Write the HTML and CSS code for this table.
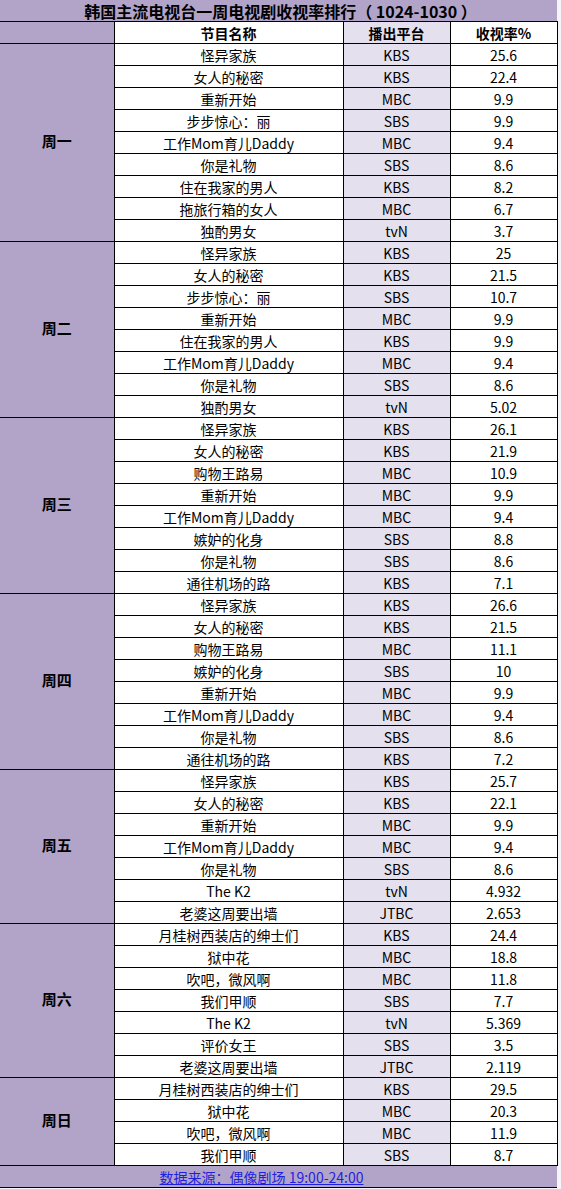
FILE: index.html
```html
<!DOCTYPE html>
<html lang="zh-CN">
<head>
<meta charset="utf-8">
<title>韩国主流电视台一周电视剧收视率排行</title>
<link rel="stylesheet" href="styles.css">
</head>
<body>
<table class="rank">
<colgroup><col class="c-day"><col class="c-name"><col class="c-plat"><col class="c-rate"></colgroup>
<thead>
<tr class="title-row"><th colspan="4">韩国主流电视台一周电视剧收视率排行（ 1024-1030 ）</th></tr>
<tr class="head-row"><th class="day"></th><th>节目名称</th><th class="plat">播出平台</th><th>收视率%</th></tr>
</thead>
<tbody>
<tr><td class="day" rowspan="9">周一</td><td>怪异家族</td><td class="plat">KBS</td><td>25.6</td></tr>
<tr><td>女人的秘密</td><td class="plat">KBS</td><td>22.4</td></tr>
<tr><td>重新开始</td><td class="plat">MBC</td><td>9.9</td></tr>
<tr><td>步步惊心：丽</td><td class="plat">SBS</td><td>9.9</td></tr>
<tr><td>工作Mom育儿Daddy</td><td class="plat">MBC</td><td>9.4</td></tr>
<tr><td>你是礼物</td><td class="plat">SBS</td><td>8.6</td></tr>
<tr><td>住在我家的男人</td><td class="plat">KBS</td><td>8.2</td></tr>
<tr><td>拖旅行箱的女人</td><td class="plat">MBC</td><td>6.7</td></tr>
<tr><td>独酌男女</td><td class="plat">tvN</td><td>3.7</td></tr>

<tr><td class="day" rowspan="8">周二</td><td>怪异家族</td><td class="plat">KBS</td><td>25</td></tr>
<tr><td>女人的秘密</td><td class="plat">KBS</td><td>21.5</td></tr>
<tr><td>步步惊心：丽</td><td class="plat">SBS</td><td>10.7</td></tr>
<tr><td>重新开始</td><td class="plat">MBC</td><td>9.9</td></tr>
<tr><td>住在我家的男人</td><td class="plat">KBS</td><td>9.9</td></tr>
<tr><td>工作Mom育儿Daddy</td><td class="plat">MBC</td><td>9.4</td></tr>
<tr><td>你是礼物</td><td class="plat">SBS</td><td>8.6</td></tr>
<tr><td>独酌男女</td><td class="plat">tvN</td><td>5.02</td></tr>

<tr><td class="day" rowspan="8">周三</td><td>怪异家族</td><td class="plat">KBS</td><td>26.1</td></tr>
<tr><td>女人的秘密</td><td class="plat">KBS</td><td>21.9</td></tr>
<tr><td>购物王路易</td><td class="plat">MBC</td><td>10.9</td></tr>
<tr><td>重新开始</td><td class="plat">MBC</td><td>9.9</td></tr>
<tr><td>工作Mom育儿Daddy</td><td class="plat">MBC</td><td>9.4</td></tr>
<tr><td>嫉妒的化身</td><td class="plat">SBS</td><td>8.8</td></tr>
<tr><td>你是礼物</td><td class="plat">SBS</td><td>8.6</td></tr>
<tr><td>通往机场的路</td><td class="plat">KBS</td><td>7.1</td></tr>

<tr><td class="day" rowspan="8">周四</td><td>怪异家族</td><td class="plat">KBS</td><td>26.6</td></tr>
<tr><td>女人的秘密</td><td class="plat">KBS</td><td>21.5</td></tr>
<tr><td>购物王路易</td><td class="plat">MBC</td><td>11.1</td></tr>
<tr><td>嫉妒的化身</td><td class="plat">SBS</td><td>10</td></tr>
<tr><td>重新开始</td><td class="plat">MBC</td><td>9.9</td></tr>
<tr><td>工作Mom育儿Daddy</td><td class="plat">MBC</td><td>9.4</td></tr>
<tr><td>你是礼物</td><td class="plat">SBS</td><td>8.6</td></tr>
<tr><td>通往机场的路</td><td class="plat">KBS</td><td>7.2</td></tr>

<tr><td class="day" rowspan="7">周五</td><td>怪异家族</td><td class="plat">KBS</td><td>25.7</td></tr>
<tr><td>女人的秘密</td><td class="plat">KBS</td><td>22.1</td></tr>
<tr><td>重新开始</td><td class="plat">MBC</td><td>9.9</td></tr>
<tr><td>工作Mom育儿Daddy</td><td class="plat">MBC</td><td>9.4</td></tr>
<tr><td>你是礼物</td><td class="plat">SBS</td><td>8.6</td></tr>
<tr><td>The K2</td><td class="plat">tvN</td><td>4.932</td></tr>
<tr><td>老婆这周要出墙</td><td class="plat">JTBC</td><td>2.653</td></tr>

<tr><td class="day" rowspan="7">周六</td><td>月桂树西装店的绅士们</td><td class="plat">KBS</td><td>24.4</td></tr>
<tr><td>狱中花</td><td class="plat">MBC</td><td>18.8</td></tr>
<tr><td>吹吧，微风啊</td><td class="plat">MBC</td><td>11.8</td></tr>
<tr><td>我们甲顺</td><td class="plat">SBS</td><td>7.7</td></tr>
<tr><td>The K2</td><td class="plat">tvN</td><td>5.369</td></tr>
<tr><td>评价女王</td><td class="plat">SBS</td><td>3.5</td></tr>
<tr><td>老婆这周要出墙</td><td class="plat">JTBC</td><td>2.119</td></tr>

<tr><td class="day" rowspan="4">周日</td><td>月桂树西装店的绅士们</td><td class="plat">KBS</td><td>29.5</td></tr>
<tr><td>狱中花</td><td class="plat">MBC</td><td>20.3</td></tr>
<tr><td>吹吧，微风啊</td><td class="plat">MBC</td><td>11.9</td></tr>
<tr><td>我们甲顺</td><td class="plat">SBS</td><td>8.7</td></tr>
</tbody>
<tfoot>
<tr class="foot-row"><td colspan="4"><a href="#">数据来源：偶像剧场 19:00-24:00</a></td></tr>
</tfoot>
</table>
</body>
</html>
```
FILE: styles.css
```css
html, body {
  margin: 0;
  padding: 0;
  background: #f6f4f9;
}
body {
  font-family: "Noto Sans CJK SC", "Noto Sans", sans-serif;
  color: #000;
}
.rank {
  width: 557px;
  border-collapse: collapse;
  table-layout: fixed;
}
.c-day { width: 114px; }
.c-name { width: 229px; }
.c-plat { width: 107px; }
.c-rate { width: 107px; }

.rank th, .rank td {
  padding: 0;
  height: 21px;
  line-height: 20px;
  font-size: 14px;
  text-align: center;
  vertical-align: middle;
  border: 1px solid #000;
  background: #fff;
  font-weight: normal;
  white-space: nowrap;
  overflow: hidden;
}
.rank th { font-weight: bold; }
.rank .plat { background: #e5e0ee; }
.rank .day {
  background: #b1a4c8;
  font-weight: bold;
  font-size: 15px;
  border-left: none;
}
.rank tbody .day { padding-bottom: 3px; }
.title-row th {
  background: #b1a4c8;
  font-size: 16px;
  border: none;
  border-bottom: 1px solid #000;
  height: 21px;
  padding-left: 4px;
}
.head-row th:last-child, .rank tbody td:last-child { border-right: 1px solid #000; }
.foot-row td {
  background: #b1a4c8;
  border-left: none;
  border-right: none;
  padding-right: 34px;
}
.foot-row a {
  color: #1f1fe0;
  text-decoration: underline;
}
```
